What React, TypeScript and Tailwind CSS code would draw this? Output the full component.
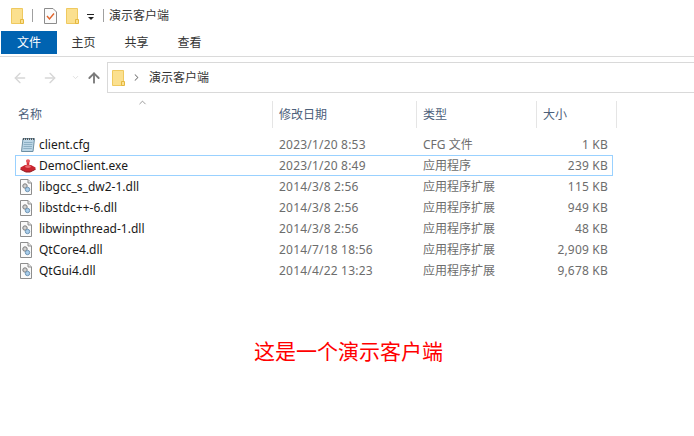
import { ArrowLeft, ArrowRight, ArrowUp, ChevronDown, ChevronRight, ChevronUp } from "lucide-react";

const font = { fontFamily: '"Noto Sans", "Noto Sans CJK SC", sans-serif' };

const files = [
  { name: "client.cfg", date: "2023/1/20 8:53", type: "CFG 文件", size: "1 KB", icon: "cfg" },
  { name: "DemoClient.exe", date: "2023/1/20 8:49", type: "应用程序", size: "239 KB", icon: "exe" },
  { name: "libgcc_s_dw2-1.dll", date: "2014/3/8 2:56", type: "应用程序扩展", size: "115 KB", icon: "dll" },
  { name: "libstdc++-6.dll", date: "2014/3/8 2:56", type: "应用程序扩展", size: "949 KB", icon: "dll" },
  { name: "libwinpthread-1.dll", date: "2014/3/8 2:56", type: "应用程序扩展", size: "48 KB", icon: "dll" },
  { name: "QtCore4.dll", date: "2014/7/18 18:56", type: "应用程序扩展", size: "2,909 KB", icon: "dll" },
  { name: "QtGui4.dll", date: "2014/4/22 13:23", type: "应用程序扩展", size: "9,678 KB", icon: "dll" },
];

function FolderIcon() {
  return (
    <svg width="14" height="16" viewBox="0 0 14 16" className="shrink-0">
      <path d="M0.5 0.5H11.5V15.5H0.5Z" fill="#fbe08f" stroke="#efc95f" />
      <path d="M9.5 11.5H12.5V15.5H9.5Z" fill="#fbe08f" stroke="#e5b83f" />
    </svg>
  );
}

function CheckDocIcon() {
  return (
    <svg width="13" height="16" viewBox="0 0 13 16" className="shrink-0">
      <path d="M0.5 0.5H9L12.5 4V15.5H0.5Z" fill="#fbfbfb" stroke="#8c8c8c" />
      <path d="M3 8L5.5 11L10 5.5" fill="none" stroke="#e0632a" strokeWidth="1.4" />
    </svg>
  );
}

function FileIcon({ kind }: { kind: string }) {
  if (kind === "cfg") {
    return (
      <svg width="16" height="16" viewBox="0 0 16 16" className="shrink-0">
        <path d="M3 1.5H14.5L13 14.5H1.5Z" fill="#bcd6e6" stroke="#6d8fa3" />
        <path d="M3.5 1V3M5.5 1V3M7.5 1V3M9.5 1V3M11.5 1V3M13.5 1V3" stroke="#555" />
        <path d="M4 5.5H12.5M3.7 7.5H12.3M3.5 9.5H12M3.3 11.5H11.8" stroke="#8db0c4" />
      </svg>
    );
  }
  if (kind === "exe") {
    return (
      <svg width="16" height="14" viewBox="0 0 16 14" className="shrink-0">
        <path d="M6.7 1.2H9.3V7H6.7Z" fill="#d8333b" />
        <ellipse cx="8" cy="2" rx="2" ry="1.8" fill="#e8555c" />
        <path d="M0.5 8.5L5 6H11L15.5 8.5V10.5L10 13H6L0.5 10.5Z" fill="#c9252f" />
        <path d="M0.5 10L6 12.4H10L15.5 10V10.8L10 13.4H6L0.5 10.8Z" fill="#8d1a22" />
        <ellipse cx="8" cy="7.6" rx="3" ry="1.3" fill="#ea6a6f" />
      </svg>
    );
  }
  return (
    <svg width="12" height="16" viewBox="0 0 12 16" className="-ml-[2px] mr-[2px] shrink-0">
      <path d="M0.5 0.5H8L11.5 4V15.5H0.5Z" fill="#fafafa" stroke="#8e8e8e" />
      <path d="M8 0.5V4H11.5" fill="#e4e4e4" stroke="#8e8e8e" />
      <circle cx="5" cy="7" r="2.2" fill="#d0d0d0" stroke="#7d7d7d" />
      <circle cx="7.5" cy="10.5" r="2.2" fill="#a9cdea" stroke="#6f94b3" />
    </svg>
  );
}

export default function App() {
  return (
    <div className="h-[436px] w-[694px] overflow-hidden bg-white text-[12px] leading-none text-[#1a1a1a]" style={font}>
      {/* title bar */}
      <div className="flex h-[31px] items-center pl-[11px]">
        <FolderIcon />
        <div className="ml-[7px] h-[13px] w-px bg-[#a0a0a0]" />
        <div className="ml-[11px]"><CheckDocIcon /></div>
        <div className="ml-[9px]"><FolderIcon /></div>
        <div className="ml-[7px] flex w-[7px] flex-col items-center pt-[2px]">
          <div className="h-px w-[7px] bg-[#222]" />
          <div className="mt-[2px] h-0 w-0 border-x-[3px] border-t-[3px] border-x-transparent border-t-[#222]" />
        </div>
        <div className="ml-[9px] h-[13px] w-px bg-[#a0a0a0]" />
        <span className="ml-[5px] text-[#333]">演示客户端</span>
      </div>

      {/* ribbon tabs */}
      <div className="flex h-[26px] items-start border-b border-[#dadada] pl-px">
        <div className="flex h-[23px] w-[56px] items-center justify-center bg-[#0063b1] text-white">文件</div>
        <div className="flex h-[23px] w-[53px] items-center justify-center text-[#333]">主页</div>
        <div className="flex h-[23px] w-[53px] items-center justify-center text-[#333]">共享</div>
        <div className="flex h-[23px] w-[53px] items-center justify-center text-[#333]">查看</div>
      </div>

      {/* address bar */}
      <div className="mt-[5px] flex h-[31px] items-center">
        <div className="flex w-[107px] items-center pl-[12px]">
          <ArrowLeft size={16} strokeWidth={2} className="text-[#d6d6d6]" />
          <ArrowRight size={16} strokeWidth={2} className="ml-[14px] text-[#d6d6d6]" />
          <ChevronDown size={9} strokeWidth={2} className="ml-[13px] text-[#d6d6d6]" />
          <ArrowUp size={16} strokeWidth={2.8} className="ml-[6px] text-[#7a7a7a]" />
        </div>
        <div className="flex h-[31px] flex-1 items-center border border-r-0 border-[#d9d9d9] pl-[4px]">
          <FolderIcon />
          <ChevronRight size={11} strokeWidth={2.2} className="ml-[5px] text-[#777]" />
          <span className="ml-[7px] text-[#333]">演示客户端</span>
        </div>
      </div>

      {/* column headers */}
      <div className="relative mt-[8px] flex h-[27px] items-center text-[#4c607a]">
        <ChevronUp size={11} strokeWidth={1.6} className="absolute left-[137px] top-[-4px] text-[#777]" />
        <div className="w-[272px] pl-[18px]">名称</div>
        <div className="h-full w-[144px] border-l border-[#e5e5e5] pl-[6px] leading-[27px]">修改日期</div>
        <div className="h-full w-[120px] border-l border-[#e5e5e5] pl-[6px] leading-[27px]">类型</div>
        <div className="h-full w-[81px] border-x border-[#e5e5e5] pl-[6px] leading-[27px]">大小</div>
      </div>

      {/* file list */}
      <div className="mt-[6px] pl-[15px]">
        {files.map((f) => (
          <div
            key={f.name}
            className={`flex h-[21px] w-[598px] items-center border ${
              f.icon === "exe" ? "border-[#99d1ff]" : "border-transparent"
            }`}
          >
            <div className="flex w-[23px] justify-center pl-[1px]"><FileIcon kind={f.icon} /></div>
            <div className="w-[240px] text-[#1a1a1a]">{f.name}</div>
            <div className="w-[144px] tracking-[0.2px] text-[#6d6d6d]">{f.date}</div>
            <div className="w-[120px] text-[#6d6d6d]">{f.type}</div>
            <div className="w-[65px] text-right tracking-[0.2px] text-[#6d6d6d]">{f.size}</div>
          </div>
        ))}
      </div>

      {/* caption */}
      <div className="mt-[58px] pl-[254px] text-[21px] leading-[24px] text-[#ff0000]">这是一个演示客户端</div>
    </div>
  );
}
